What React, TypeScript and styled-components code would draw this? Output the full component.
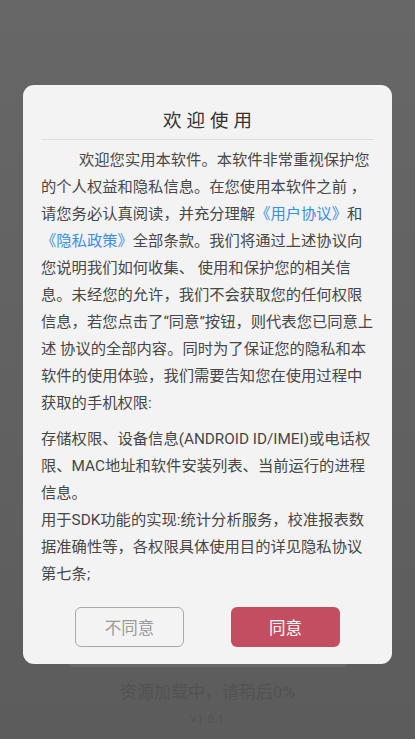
import React from 'react'
import styled, { createGlobalStyle } from 'styled-components'

const GlobalStyle = createGlobalStyle`
  html, body {
    margin: 0;
    padding: 0;
    height: 100%;
  }
  body {
    font-family: Roboto, "Noto Sans CJK SC", sans-serif;
    background: linear-gradient(180deg, #676767 0%, #5c5c5c 100%);
  }
`

export default function App() {
  return (
    <>
      <GlobalStyle />
      <LoadingPage>
        <ProgressTrack />
        <LoadingText>资源加载中，请稍后0%</LoadingText>
        <VersionText>V1.0.1</VersionText>
      </LoadingPage>
      <Overlay>
        <Dialog>
          <Title>欢迎使用</Title>
          <Divider />
          <Body>
            <Paragraph $indent>
              欢迎您实用本软件。本软件非常重视保护您
              <br />
              的个人权益和隐私信息。在您使用本软件之前 ，
              <br />
              请您务必认真阅读，并充分理解<Link>《用户协议》</Link>和
              <br />
              <Link>《隐私政策》</Link>全部条款。我们将通过上述协议向
              <br />
              您说明我们如何收集、 使用和保护您的相关信
              <br />
              息。未经您的允许，我们不会获取您的任何权限
              <br />
              信息，若您点击了“同意”按钮，则代表您已同意上
              <br />
              述 协议的全部内容。同时为了保证您的隐私和本
              <br />
              软件的使用体验，我们需要告知您在使用过程中
              <br />
              获取的手机权限:
            </Paragraph>
            <Paragraph>
              存储权限、设备信息(ANDROID ID/IMEI)或电话权
              <br />
              限、MAC地址和软件安装列表、当前运行的进程
              <br />
              信息。
              <br />
              用于SDK功能的实现:统计分析服务，校准报表数
              <br />
              据准确性等，各权限具体使用目的详见隐私协议
              <br />
              第七条;
            </Paragraph>
          </Body>
          <ButtonRow>
            <DialogButton $primary={false}>不同意</DialogButton>
            <DialogButton $primary>同意</DialogButton>
          </ButtonRow>
        </Dialog>
      </Overlay>
    </>
  )
}

const LoadingPage = styled.div`
  height: 739px;
  display: flex;
  flex-direction: column;
  align-items: center;
  justify-content: flex-end;
  padding-bottom: 12px;
  box-sizing: border-box;
`

const ProgressTrack = styled.div`
  width: 278px;
  height: 6px;
  border-radius: 3px;
  background: #676767;
`

const LoadingText = styled.div`
  margin-top: 13px;
  color: #525252;
  font-size: 17px;
  line-height: 24px;
`

const VersionText = styled.div`
  margin-top: 9px;
  color: #525252;
  font-size: 10px;
  letter-spacing: 1px;
  line-height: 14px;
`

const Overlay = styled.div`
  position: fixed;
  inset: 0;
  display: flex;
  justify-content: center;
  align-items: flex-start;
`

const Dialog = styled.div`
  margin-top: 85px;
  width: 369px;
  box-sizing: border-box;
  background: #f3f3f3;
  border-radius: 11px;
  padding: 22px 18px 17px;
  display: flex;
  flex-direction: column;
`

const Title = styled.div`
  text-align: center;
  color: #333333;
  font-size: 18.5px;
  letter-spacing: 5px;
  padding-left: 5px;
  line-height: 28px;
  padding-bottom: 4px;
`

const Divider = styled.div`
  height: 1px;
  background: #e3ddd8;
`

const Body = styled.div`
  margin-top: 7px;
  color: #474747;
  font-size: 15.3px;
  line-height: 27px;
  white-space: nowrap;
`

const Paragraph = styled.p<{ $indent?: boolean }>`
  margin: 0 0 9px;
  text-indent: ${(p) => (p.$indent ? '38px' : '0')};

  &:last-child {
    margin-bottom: 0;
  }
`

const Link = styled.span`
  color: #3b8fe0;
`

const ButtonRow = styled.div`
  margin-top: 19px;
  display: flex;
  justify-content: center;
  gap: 47px;
`

const DialogButton = styled.div<{ $primary: boolean }>`
  width: 109px;
  height: 40px;
  box-sizing: border-box;
  border-radius: 6px;
  display: flex;
  align-items: center;
  justify-content: center;
  font-size: 16.5px;
  cursor: pointer;
  background: ${(p) => (p.$primary ? '#c44e61' : 'transparent')};
  color: ${(p) => (p.$primary ? '#ffffff' : '#9a9a9a')};
  border: ${(p) => (p.$primary ? 'none' : '1.5px solid #a9a9a9')};
`
